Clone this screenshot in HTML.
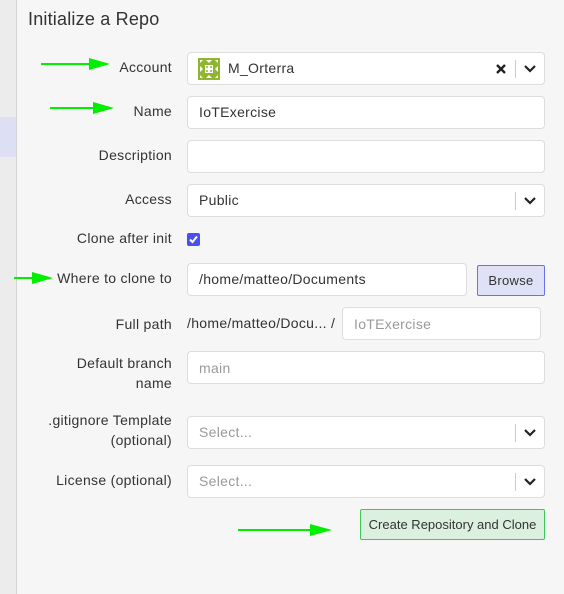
<!DOCTYPE html>
<html><head><style>
*{box-sizing:border-box;margin:0;padding:0}
body{width:564px;height:594px;background:#f6f6f6;font-family:"Liberation Sans","DejaVu Sans",sans-serif;color:#333;position:relative;overflow:hidden;font-size:14px;letter-spacing:0.3px}
.a{position:absolute}
.side{left:0;top:0;width:17px;height:594px;background:#ececec;border-right:1px solid #d4d4d4}
.hl{left:0;top:117px;width:16px;height:40px;background:#dde0f5}
.lbl{position:absolute;right:392px;text-align:right;font-size:14px;color:#333;line-height:20px}
.inp{position:absolute;background:#fff;border:1px solid #ddd;border-radius:4px;height:33px;padding-left:11px;line-height:31px;font-size:14px;color:#333}
.ph{color:#9a9a9a}
.sep{position:absolute;right:28px;top:7px;width:1px;height:18px;background:#ccc}
.chev{position:absolute;right:8px;top:11px}
</style></head><body>
<div class="a side"></div><div class="a hl"></div>
<div class="a" style="left:28px;top:9px;font-size:18px;color:#333;letter-spacing:0.2px">Initialize a Repo</div>

<svg class="a" style="left:0;top:0" width="564" height="594">
<g fill="#00ee00" stroke="#00ee00" stroke-width="2">
<line x1="41" y1="64" x2="92" y2="64"/><polygon points="89,58 110,64 89,70" stroke="none"/>
<line x1="50" y1="108" x2="96" y2="108"/><polygon points="93,102 114,108 93,114" stroke="none"/>
<line x1="14" y1="278" x2="36" y2="278"/><polygon points="32,272 53,278 32,284" stroke="none"/>
<line x1="238" y1="530" x2="314" y2="530"/><polygon points="310,524 332,530 310,536" stroke="none"/>
</g></svg>

<div class="lbl" style="top:57px">Account</div>
<div class="inp" style="left:187px;top:52px;width:358px;padding-left:40px">M_Orterra
 <svg class="a" style="left:10px;top:5px" width="22" height="22" viewBox="0 0 22 22"><rect width="22" height="22" fill="#8fb531"/><g fill="#fff"><rect x="7" y="7" width="8" height="8"/><polygon points="2,2 5,2 2,5"/><polygon points="20,2 17,2 20,5"/><polygon points="2,20 5,20 2,17"/><polygon points="20,20 17,20 20,17"/><polygon points="8,2 14,2 11,5"/><polygon points="8,20 14,20 11,17"/><polygon points="2,8 2,14 5,11"/><polygon points="20,8 20,14 17,11"/></g><g fill="#8fb531"><circle cx="9" cy="9" r="1"/><circle cx="13" cy="9" r="1"/><circle cx="9" cy="13" r="1"/><circle cx="13" cy="13" r="1"/></g></svg>
 <svg class="a" style="right:38px;top:11px" width="10" height="10"><path d="M1 1L9 9M9 1L1 9" stroke="#222" stroke-width="2.4"/></svg>
 <div class="sep"></div>
 <svg class="chev" width="12" height="10"><path d="M1 2L6 7L11 2" stroke="#222" stroke-width="2.2" fill="none"/></svg></div>

<div class="lbl" style="top:101px">Name</div>
<div class="inp" style="left:187px;top:96px;width:358px">IoTExercise</div>

<div class="lbl" style="top:145px">Description</div>
<div class="inp" style="left:187px;top:140px;width:358px"></div>

<div class="lbl" style="top:189px">Access</div>
<div class="inp" style="left:187px;top:184px;width:358px">Public<div class="sep"></div>
 <svg class="chev" width="12" height="10"><path d="M1 2L6 7L11 2" stroke="#222" stroke-width="2.2" fill="none"/></svg></div>

<div class="lbl" style="top:228px">Clone after init</div>
<div class="a" style="left:187px;top:233px;width:13px;height:13px;background:#4a4ff0;border-radius:2px"><svg width="13" height="13" style="display:block"><path d="M3 6.5L5.5 9L10 3.5" stroke="#fff" stroke-width="2" fill="none"/></svg></div>

<div class="lbl" style="top:268px">Where to clone to</div>
<div class="inp" style="left:187px;top:263px;width:280px">/home/matteo/Documents</div>
<div class="a" style="left:477px;top:265px;width:68px;height:31px;background:#dfe2f7;border:1px solid #6c70e8;border-radius:2px;text-align:center;line-height:29px;font-size:13px">Browse</div>

<div class="lbl" style="top:314px">Full path</div>
<div class="a" style="left:187px;top:315px;font-size:14px">/home/matteo/Docu... /</div>
<div class="inp ph" style="left:342px;top:307px;width:199px;padding-top:1px">IoTExercise</div>

<div class="lbl" style="top:353px">Default branch<br>name</div>
<div class="inp ph" style="left:187px;top:351px;width:358px;padding-top:1px">main</div>

<div class="lbl" style="top:410px">.gitignore Template<br>(optional)</div>
<div class="inp ph" style="left:187px;top:416px;width:358px">Select...<div class="sep"></div>
 <svg class="chev" width="12" height="10"><path d="M1 2L6 7L11 2" stroke="#222" stroke-width="2.2" fill="none"/></svg></div>

<div class="lbl" style="top:470px">License (optional)</div>
<div class="inp ph" style="left:187px;top:465px;width:358px">Select...<div class="sep"></div>
 <svg class="chev" width="12" height="10"><path d="M1 2L6 7L11 2" stroke="#222" stroke-width="2.2" fill="none"/></svg></div>

<div class="a" style="left:360px;top:509px;width:185px;height:31px;background:#dcf0df;border:1px solid #3fc75a;border-radius:2px;text-align:center;line-height:29px;font-size:13px;letter-spacing:0">Create Repository and Clone</div>
</body></html>
